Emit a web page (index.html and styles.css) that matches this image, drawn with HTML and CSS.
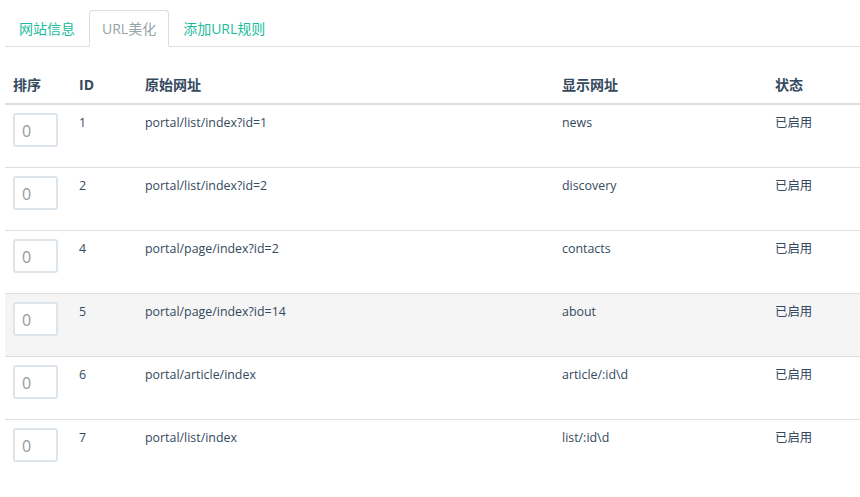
FILE: index.html
```html
<!DOCTYPE html>
<html lang="zh-CN">
<head>
<meta charset="utf-8">
<title>URL美化</title>
<link rel="stylesheet" href="styles.css">
</head>
<body>
<div class="wrap">
  <ul class="tabs">
    <li class="tab"><a href="#">网站信息</a></li>
    <li class="tab active"><a href="#">URL美化</a></li>
    <li class="tab"><a href="#">添加URL规则</a></li>
  </ul>
  <table class="grid">
    <thead>
      <tr>
        <th class="c-sort">排序</th>
        <th class="c-id">ID</th>
        <th class="c-src">原始网址</th>
        <th class="c-show">显示网址</th>
        <th class="c-state">状态</th>
      </tr>
    </thead>
    <tbody>
      <tr><td><input class="order" type="text" value="0"></td><td>1</td><td>portal/list/index?id=1</td><td>news</td><td>已启用</td></tr>
      <tr><td><input class="order" type="text" value="0"></td><td>2</td><td>portal/list/index?id=2</td><td>discovery</td><td>已启用</td></tr>
      <tr><td><input class="order" type="text" value="0"></td><td>4</td><td>portal/page/index?id=2</td><td>contacts</td><td>已启用</td></tr>
      <tr class="hover"><td><input class="order" type="text" value="0"></td><td>5</td><td>portal/page/index?id=14</td><td>about</td><td>已启用</td></tr>
      <tr><td><input class="order" type="text" value="0"></td><td>6</td><td>portal/article/index</td><td>article/:id\d</td><td>已启用</td></tr>
      <tr><td><input class="order" type="text" value="0"></td><td>7</td><td>portal/list/index</td><td>list/:id\d</td><td>已启用</td></tr>
    </tbody>
  </table>
</div>
</body>
</html>
```
FILE: styles.css
```css
html, body {
  margin: 0;
  padding: 0;
  background: #fff;
}
body {
  font-family: "Open Sans", "Noto Sans CJK SC", sans-serif;
  font-size: 12.4px;
  color: #34495e;
}
.wrap {
  padding: 10px 0 0 5px;
}
.tabs {
  list-style: none;
  margin: 0;
  padding: 0;
  display: flex;
  border-bottom: 1px solid #dddddd;
}
.tab {
  margin-bottom: -1px;
}
.tab a {
  display: block;
  box-sizing: border-box;
  height: 37px;
  line-height: 36px;
  padding: 0 13px 0 13px;
  font-size: 14px;
  color: #1abc9c;
  text-decoration: none;
  border: 1px solid transparent;
  border-radius: 4px 4px 0 0;
}
.tab.active a {
  padding: 0 12px;
  color: #95a5a6;
  background: #fff;
  border-color: #dddddd #dddddd transparent;
}
.grid {
  margin-top: 20px;
  width: 855px;
  border-collapse: collapse;
}
.grid th {
  text-align: left;
  font-size: 14px;
  font-weight: bold;
  line-height: 20px;
  padding: 8px 8px;
  border-bottom: 2px solid #dddddd;
}
.c-sort { width: 50px; }
.c-id { width: 50px; }
.c-src { width: 401px; }
.c-show { width: 197px; }
.grid td {
  vertical-align: top;
  line-height: 20px;
  padding: 8px 8px 20px;
  border-top: 1px solid #dddddd;
}
.grid tbody tr:first-child td {
  border-top: 0;
}
.grid tr.hover td {
  background: #f5f5f5;
}
.order {
  display: block;
  box-sizing: border-box;
  width: 45px;
  height: 34px;
  margin: 0;
  padding: 2px 7px 0;
  border: 2px solid #dce4ec;
  border-radius: 3px;
  background: #fff;
  font-family: "Open Sans", sans-serif;
  font-size: 16px;
  color: #999999;
  outline: none;
}
```
